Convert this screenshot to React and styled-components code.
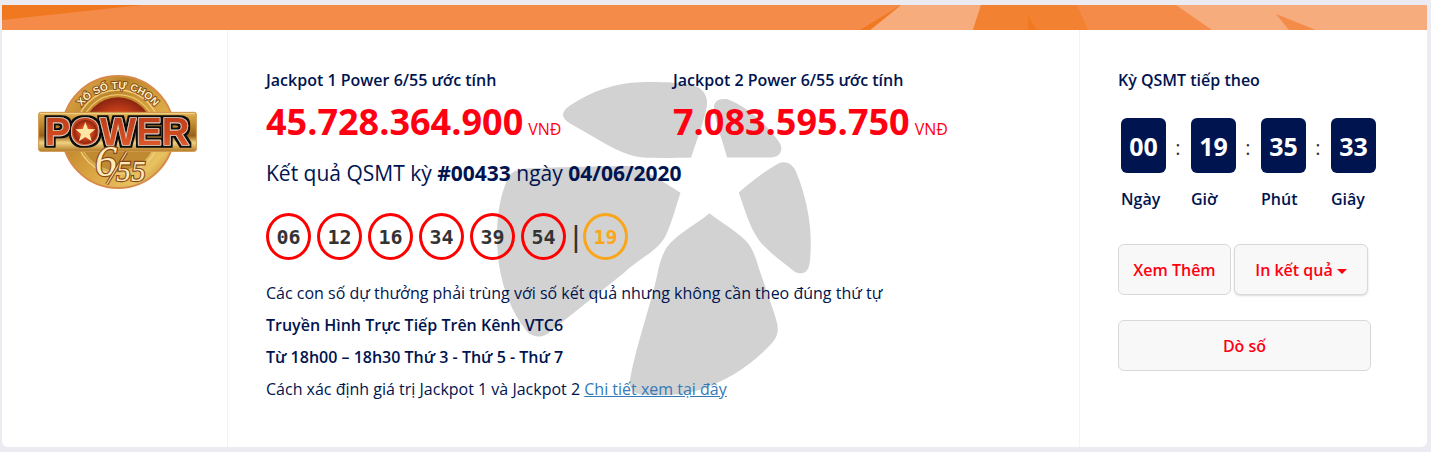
import React from "react";
import styled, { createGlobalStyle } from "styled-components";

const navy = "#001450";
const red = "#ff0012";

const GlobalStyle = createGlobalStyle`
  *, *::before, *::after { box-sizing: border-box; }
  body {
    margin: 0;
    background: #ebebf1;
    color: ${navy};
    font-family: "Open Sans", "Noto Sans", sans-serif;
    font-size: 16px;
    line-height: 32px;
  }
  p, h2 { margin: 0; }
`;

const Page = styled.main`
  padding: 5px 4px 5px 2px;
`;

const Card = styled.section`
  background: #fff;
  border-radius: 0 0 6px 6px;
  overflow: hidden;
`;

const Banner = styled.svg`
  display: block;
  width: 100%;
  height: 25px;
`;

const Columns = styled.div`
  display: grid;
  grid-template-columns: 226px minmax(0, 1fr) 348px;
`;

const LogoColumn = styled.div`
  display: flex;
  justify-content: center;
  align-items: flex-start;
  padding: 44px 0 0 4px;
  border-right: 1px solid #f3f3f6;
`;

const Logo = styled.svg`
  display: block;
  width: 160px;
  height: 116px;
`;

const ResultColumn = styled.div`
  position: relative;
  padding: 34px 38px 42px;
`;

const Watermark = styled.svg`
  position: absolute;
  inset: 0;
  margin: auto;
  width: 314px;
  height: 314px;
  fill: #d2d2d2;
`;

const ResultContent = styled.div`
  position: relative;
`;

const Jackpots = styled.div`
  display: grid;
  grid-template-columns: 407px 1fr;
`;

const Heading = styled.h2`
  font-size: 16px;
  font-weight: 600;
  line-height: 32px;
`;

const Amount = styled.p`
  color: ${red};
  font-size: 36px;
  font-weight: 700;
  line-height: 52px;
  white-space: nowrap;
`;

const Currency = styled.span`
  font-size: 16px;
  font-weight: 400;
  margin-left: 5px;
`;

const DrawLine = styled.p`
  font-size: 21px;
  line-height: 36px;
`;

const Balls = styled.div`
  display: flex;
  align-items: center;
  gap: 6px;
  margin: 22px 0 17px;
`;

const Ball = styled.span`
  display: flex;
  align-items: center;
  justify-content: center;
  width: 45px;
  height: 47px;
  border: 3px solid ${(p) => (p.$bonus ? "#faa61a" : "#ff0000")};
  border-radius: 50%;
  color: ${(p) => (p.$bonus ? "#faa61a" : "#333")};
  font: 700 20px/24px "DejaVu Sans Mono", monospace;
`;

const Divider = styled.span`
  width: 5px;
  color: #333;
  font: 30px/40px "Liberation Sans", sans-serif;
`;

const Note = styled.p`
  font-weight: ${(p) => (p.$strong ? 600 : 400)};
`;

const DetailLink = styled.a`
  color: #337ab7;
  text-decoration: underline;
`;

const NextColumn = styled.div`
  padding: 34px 38px 40px;
  border-left: 1px solid #f3f3f6;
`;

const Countdown = styled.div`
  display: flex;
  padding: 22px 3px 0;
`;

const Unit = styled.div`
  width: 45px;
`;

const UnitValue = styled.div`
  height: 55px;
  border-radius: 6px;
  background: ${navy};
  color: #fff;
  font-size: 25px;
  font-weight: 700;
  line-height: 57px;
  text-align: center;
`;

const UnitLabel = styled.div`
  margin-top: 10px;
  font-weight: 600;
`;

const Colon = styled.span`
  width: 25px;
  padding-right: 1px;
  color: #333;
  font-size: 20px;
  line-height: 60px;
  text-align: center;
`;

const Actions = styled.div`
  display: flex;
  flex-wrap: wrap;
  gap: 25px 3px;
  margin-top: 29px;
`;

const Button = styled.button`
  display: flex;
  align-items: center;
  justify-content: center;
  gap: 4px;
  width: ${(p) => p.$width}px;
  height: 51px;
  padding: 0;
  border: 1px solid #d8d8d8;
  border-radius: 6px;
  background: #f8f8f8;
  box-shadow: ${(p) => (p.$raised ? "0 1px 2px rgba(0, 0, 0, 0.15)" : "none")};
  color: ${red};
  font: 600 16px/24px "Open Sans", "Noto Sans", sans-serif;
`;

const Caret = styled.span`
  border: 5px solid transparent;
  border-top-color: currentColor;
  border-bottom: 0;
  margin-top: 3px;
`;

const numbers = ["06", "12", "16", "34", "39", "54"];
const units = [
  ["00", "Ngày"],
  ["19", "Giờ"],
  ["35", "Phút"],
  ["33", "Giây"],
];

function PowerLogo() {
  return (
    <Logo viewBox="20 28 480 348" role="img" aria-label="Power 6/55">
      <defs>
        <linearGradient id="disc" x1="0" y1="0" x2="1" y2="1">
          <stop offset="0" stopColor="#e9b956" />
          <stop offset="0.3" stopColor="#bd8429" />
          <stop offset="0.55" stopColor="#d9a341" />
          <stop offset="0.8" stopColor="#e8c160" />
          <stop offset="1" stopColor="#a96f1f" />
        </linearGradient>
        <linearGradient id="bar" x1="0" y1="0" x2="0" y2="1">
          <stop offset="0" stopColor="#dfb252" />
          <stop offset="0.35" stopColor="#bb8129" />
          <stop offset="0.6" stopColor="#98601a" />
          <stop offset="0.78" stopColor="#f0d280" />
          <stop offset="1" stopColor="#b17a26" />
        </linearGradient>
        <linearGradient id="letters" x1="0" y1="0" x2="0" y2="1">
          <stop offset="0" stopColor="#b83a1c" />
          <stop offset="0.6" stopColor="#d04a20" />
          <stop offset="1" stopColor="#e86a38" />
        </linearGradient>
        <radialGradient id="core" cx="0.5" cy="0.5" r="0.5">
          <stop offset="0" stopColor="#ee7a30" />
          <stop offset="0.6" stopColor="#c8401a" />
          <stop offset="1" stopColor="#8a2410" />
        </radialGradient>
        <filter id="outline" x="-5%" y="-15%" width="110%" height="130%">
          <feMorphology in="SourceAlpha" operator="dilate" radius="5" result="wide" />
          <feFlood floodColor="#111" />
          <feComposite in2="wide" operator="in" />
          <feMerge>
            <feMergeNode />
            <feMergeNode in="SourceGraphic" />
          </feMerge>
        </filter>
        <path id="arc" d="M138 152 A138 138 0 0 1 388 152" />
      </defs>
      <circle cx="263" cy="202" r="168" fill="url(#disc)" stroke="#d98a4a" strokeWidth="6" />
      <circle cx="263" cy="202" r="126" fill="none" stroke="#f0d083" strokeWidth="4" />
      <circle cx="263" cy="202" r="112" fill="#c58b2f" stroke="#ecc66c" strokeWidth="4" />
      <circle cx="263" cy="202" r="104" fill="url(#core)" />
      <path d="M160 260 H366 A118 118 0 0 1 160 260Z" fill="#c08a32" stroke="#e5bf6a" strokeWidth="3" />
      <text
        fontFamily="Liberation Sans, sans-serif"
        fontSize="31"
        fontWeight="700"
        fill="#fff0c4"
        stroke="#7d4512"
        strokeWidth="5"
        paintOrder="stroke"
        textAnchor="middle"
      >
        <textPath href="#arc" startOffset="50%">XỔ SỐ TỰ CHỌN</textPath>
      </text>
      <rect x="25" y="143" width="473" height="117" rx="6" fill="url(#bar)" stroke="#cd934b" strokeWidth="3" />
      <path d="M29 147 H494" stroke="#f1d68c" strokeWidth="3" />
      <text
        x="43"
        y="241"
        fontFamily="Liberation Sans, sans-serif"
        fontSize="115"
        fontWeight="700"
        fill="url(#letters)"
        stroke="#dccbbc"
        strokeWidth="5"
        strokeLinejoin="round"
        paintOrder="stroke"
        filter="url(#outline)"
      >
        POWER
      </text>
      <circle cx="165" cy="202" r="36" fill="url(#core)" />
      <path
        d="M165 172 L173 193 L195 194 L178 208 L184 230 L165 217 L146 230 L152 208 L135 194 L157 193Z"
        fill="#ffe6a4"
      />
      <g
        fontFamily="Liberation Serif, serif"
        fontStyle="italic"
        fill="#ffe9b8"
        stroke="#84481a"
        strokeWidth="7"
        paintOrder="stroke"
      >
        <text x="194" y="335" fontSize="132">6</text>
        <path d="M229 359 L289 262" stroke="#84481a" strokeWidth="10" />
        <path d="M229 359 L289 262" stroke="#f2cf8c" strokeWidth="4" />
        <text x="258" y="349" fontSize="88">55</text>
      </g>
    </Logo>
  );
}

function FlowerMark() {
  return (
    <Watermark viewBox="20 66 943 942" aria-hidden="true">
      <path d="M240 135C300 95 380 66 450 66C500 65 570 66 610 76C640 84 655 110 650 140C640 190 620 240 603 292C570 293 520 294 470 293C420 292 380 270 340 248L240 190C212 175 210 155 240 135Z" />
      <path d="M672 150C668 125 685 112 715 118C770 140 830 190 870 250C880 272 870 290 845 292L711 292C700 250 680 200 672 150Z" />
      <path d="M746 397C780 370 820 335 865 310C890 300 910 315 918 335C950 410 965 500 962 560C962 590 960 610 955 625C945 645 925 643 910 632C870 600 820 565 800 530C775 490 765 450 746 397Z" />
      <path d="M658 460C690 485 740 515 765 540C785 560 795 585 805 620C825 680 845 735 860 785C868 815 860 835 845 850C790 910 720 960 620 993C560 1010 500 1007 450 1003C425 998 415 980 421 950C440 850 480 740 500 650C510 600 520 565 550 540C590 505 630 485 658 460Z" />
      <path d="M571 398C560 430 545 490 525 530C500 575 440 600 400 640L180 815C160 835 130 835 110 815C50 740 20 640 20 530C20 460 30 410 50 360C60 335 80 327 110 325C200 322 340 318 420 318C460 325 510 360 571 398Z" />
    </Watermark>
  );
}

export default function App() {
  return (
    <Page>
      <GlobalStyle />
      <Card>
        <Banner viewBox="0 0 1425 25" preserveAspectRatio="xMidYMid slice" aria-hidden="true">
          <rect width="1425" height="25" fill="#f48b49" />
          <path d="M0 0H140L0 15Z" fill="#f07820" />
          <path d="M899 0H979L971 25H868Z" fill="#f7ac7d" />
          <path d="M899 0L868 25H858Z" fill="#f07820" />
          <path d="M979 0H1075L1086 25H971Z" fill="#f28131" />
          <path d="M1026 11L1035 25H1026Z" fill="#ef7821" />
          <path d="M1174 0H1425V25H1210Z" fill="#f7ac7d" />
          <path d="M1274 9L1314 25H1287Z" fill="#f48b49" />
        </Banner>
        <Columns>
          <LogoColumn>
            <PowerLogo />
          </LogoColumn>
          <ResultColumn>
            <FlowerMark />
            <ResultContent>
              <Jackpots>
                <div>
                  <Heading>Jackpot 1 Power 6/55 ước tính</Heading>
                  <Amount>
                    45.728.364.900<Currency>VNĐ</Currency>
                  </Amount>
                </div>
                <div>
                  <Heading>Jackpot 2 Power 6/55 ước tính</Heading>
                  <Amount>
                    7.083.595.750<Currency>VNĐ</Currency>
                  </Amount>
                </div>
              </Jackpots>
              <DrawLine>
                Kết quả QSMT kỳ <b>#00433</b> ngày <b>04/06/2020</b>
              </DrawLine>
              <Balls>
                {numbers.map((n) => (
                  <Ball key={n}>{n}</Ball>
                ))}
                <Divider>|</Divider>
                <Ball $bonus>19</Ball>
              </Balls>
              <Note>Các con số dự thưởng phải trùng với số kết quả nhưng không cần theo đúng thứ tự</Note>
              <Note $strong>Truyền Hình Trực Tiếp Trên Kênh VTC6</Note>
              <Note $strong>Từ 18h00 – 18h30 Thứ 3 - Thứ 5 - Thứ 7</Note>
              <Note>
                Cách xác định giá trị Jackpot 1 và Jackpot 2 <DetailLink href="#chi-tiet">Chi tiết xem tại đây</DetailLink>
              </Note>
            </ResultContent>
          </ResultColumn>
          <NextColumn>
            <Heading>Kỳ QSMT tiếp theo</Heading>
            <Countdown>
              {units.map(([value, label], i) => (
                <React.Fragment key={label}>
                  {i > 0 && <Colon>:</Colon>}
                  <Unit>
                    <UnitValue>{value}</UnitValue>
                    <UnitLabel>{label}</UnitLabel>
                  </Unit>
                </React.Fragment>
              ))}
            </Countdown>
            <Actions>
              <Button type="button" $width={113}>Xem Thêm</Button>
              <Button type="button" $width={134} $raised>
                In kết quả
                <Caret />
              </Button>
              <Button type="button" $width={253}>Dò số</Button>
            </Actions>
          </NextColumn>
        </Columns>
      </Card>
    </Page>
  );
}
